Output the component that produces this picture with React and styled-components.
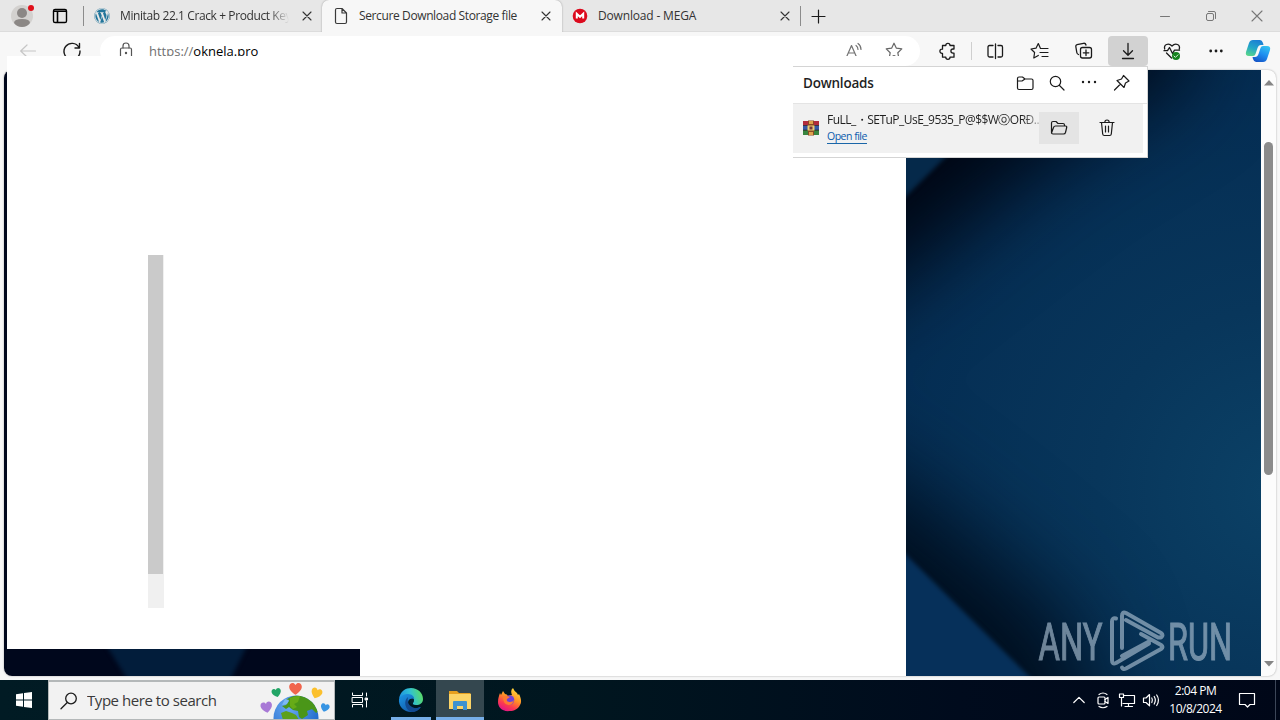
import React from 'react';
import styled, { createGlobalStyle } from 'styled-components';
import { FaWordpress } from 'react-icons/fa';

const GlobalStyle = createGlobalStyle`
  * { box-sizing: border-box; }
  body {
    margin: 0;
    overflow: hidden;
    font-family: 'Open Sans', 'Noto Sans', sans-serif;
  }
`;

const Screen = styled.div`
  position: relative;
  display: flex;
  flex-direction: column;
  width: 1280px;
  height: 720px;
  background: #f7f7f7;
`;

const Icon = styled.svg`
  display: block;
  flex: none;
  width: ${({ $w }) => $w || 20}px;
  height: ${({ $h, $w }) => $h || $w || 20}px;
  fill: none;
  stroke: ${({ $color }) => $color || '#1b1b1b'};
  stroke-width: ${({ $stroke }) => $stroke || 1.2};
  stroke-linecap: round;
  stroke-linejoin: round;
  overflow: visible;
`;

const Label = styled.span`
  flex: ${({ $grow }) => ($grow ? '1' : 'none')};
  overflow: hidden;
  white-space: nowrap;
  font-size: ${({ $size }) => $size || 12}px;
  font-weight: ${({ $bold }) => ($bold ? 600 : 400)};
  letter-spacing: ${({ $space }) => $space || 0}px;
  color: ${({ $color }) => $color || '#333'};
  ${({ $fade }) => $fade && 'mask-image: linear-gradient(to right, #000 88%, transparent);'}
`;

/* tab strip */

const TabStrip = styled.header`
  display: flex;
  flex: none;
  height: 32px;
  background: #e7e7e7;
  border-bottom: 1px solid #dcdcdc;
`;

const Profile = styled.div`
  display: flex;
  align-items: center;
  gap: 17px;
  width: 83px;
  padding-left: 10px;
`;

const Tab = styled.div`
  display: flex;
  align-items: center;
  position: relative;
  width: ${({ $active }) => ($active ? 240 : 238)}px;
  height: ${({ $active }) => ($active ? 32 : 31)}px;
  padding: ${({ $active }) => ($active ? '0 8px 1px 11px' : '0 7px 0 10px')};
  gap: 10px;
  background: ${({ $active }) => ($active ? '#f7f7f7' : 'transparent')};
  border-radius: ${({ $active }) => ($active ? '7px 7px 0 0' : '0 0 6px 6px')};
  box-shadow: ${({ $active }) => ($active ? '0 0 2px rgba(0, 0, 0, 0.35)' : 'none')};
  clip-path: inset(0 -3px 0 -3px);
`;

const Separator = styled.i`
  flex: none;
  align-self: center;
  width: 1px;
  height: ${({ $h }) => $h || 20}px;
  margin-left: ${({ $left }) => $left || 0}px;
  background: ${({ $color }) => $color || '#8c8c8c'};
`;

const NewTab = styled.div`
  display: flex;
  flex: 1;
  align-items: center;
  padding-left: 9px;
`;

const WindowButtons = styled.div`
  display: flex;
  align-items: center;
  gap: 30px;
  padding-right: 15px;
`;

/* toolbar */

const Toolbar = styled.nav`
  display: flex;
  flex: none;
  align-items: center;
  height: 38px;
  padding-left: 6px;
  background: #f7f7f7;
`;

const ToolButton = styled.div`
  display: flex;
  flex: none;
  align-items: center;
  justify-content: center;
  width: ${({ $w }) => $w || 44}px;
  height: 30px;
  margin-left: ${({ $left }) => $left || 0}px;
  margin-right: ${({ $right }) => $right || 0}px;
  border-radius: 4px;
  background: ${({ $pressed }) => ($pressed ? '#d2d2d2' : 'transparent')};
`;

const AddressBar = styled.div`
  display: flex;
  align-items: center;
  width: 820px;
  height: 30px;
  margin: 0 6px;
  padding: 0 6px 0 16px;
  border-radius: 15px;
  background: #fff;
`;

const Url = styled.span`
  flex: 1;
  margin-left: 13px;
  font-size: 13px;
  color: #707070;
  b {
    font-weight: 400;
    color: #000;
  }
`;

/* page */

const Page = styled.main`
  display: flex;
  flex: none;
  width: 1272px;
  height: 606px;
  margin-left: 4px;
  border-radius: 8px;
  overflow: hidden;
  background: #fcfcfc;
  box-shadow: 0 0 2px rgba(0, 0, 0, 0.35);
`;

const Wallpaper = styled.svg`
  display: block;
  width: 1257px;
  height: 606px;
`;

const ScrollTrack = styled.div`
  display: flex;
  flex-direction: column;
  align-items: center;
  justify-content: space-between;
  width: 15px;
  padding: 10px 0 9px;
`;

const ScrollThumb = styled.div`
  width: 9px;
  height: 333px;
  margin-bottom: 130px;
  border-radius: 5px;
  background: #8b8b8b;
`;

/* half painted window sitting over the browser */
const BlankWindow = styled.section`
  position: absolute;
  left: 7px;
  top: 56px;
  width: 899px;
  height: 620px;
  padding: 199px 0 0 141px;
  background: #fff;
  clip-path: polygon(0 0, 899px 0, 899px 620px, 353px 620px, 353px 593px, 0 593px);
`;

const BlankScroll = styled.div`
  width: 16px;
  height: 353px;
  background: #f0f0f0;
  &::before {
    content: '';
    display: block;
    width: 15px;
    height: 319px;
    background: #cacaca;
  }
`;

/* downloads flyout */

const Flyout = styled.aside`
  position: absolute;
  left: 793px;
  top: 66px;
  width: 355px;
  height: 92px;
  background: #fff;
  border: solid #d4d4d4;
  border-width: 1px 1px 1px 0;
`;

const FlyoutHead = styled.div`
  display: flex;
  align-items: center;
  height: 37px;
  padding: 0 17px 5px 10px;
  border-bottom: 1px solid #e4e4e4;
`;

const FlyoutTools = styled.div`
  display: flex;
  gap: 14px;
  margin-left: auto;
`;

const DownloadRow = styled.div`
  display: flex;
  align-items: center;
  width: 350px;
  height: 49px;
  padding: 0 0 2px 10px;
  background: #f1f1f1;
`;

const FileInfo = styled.div`
  display: flex;
  flex-direction: column;
  align-items: flex-start;
  width: 212px;
  margin-left: 8px;
`;

const FileName = styled(Label)`
  width: 212px;
  height: 17px;
  line-height: 18px;
  mask-image: linear-gradient(to right, #000 92%, rgba(0, 0, 0, 0.3));
`;

const OpenLink = styled.a`
  height: 15px;
  margin-top: 1px;
  border-bottom: 1px solid #1a66a8;
  font-size: 10.5px;
  line-height: 14px;
  letter-spacing: -0.5px;
  color: #0b5cad;
`;

const RowButton = styled.div`
  display: flex;
  align-items: center;
  justify-content: center;
  width: 40px;
  height: 32px;
  margin-right: 8px;
  background: ${({ $on }) => ($on ? '#e4e4e4' : 'transparent')};
`;

/* taskbar */

const Taskbar = styled.footer`
  display: flex;
  flex: none;
  height: 40px;
  margin-top: 4px;
  background: linear-gradient(to right, #011b24, #00161f 45%, #000b1d 75%, #000718);
`;

const TaskButton = styled.div`
  display: flex;
  align-items: center;
  justify-content: center;
  width: ${({ $w }) => $w || 48}px;
  margin-right: ${({ $right }) => $right || 0}px;
  background: ${({ $on }) => ($on ? '#34474f' : 'transparent')};
  box-shadow: ${({ $open }) => ($open ? 'inset 0 -3px #76aee8' : 'none')};
`;

const SearchBox = styled.div`
  display: flex;
  align-items: center;
  justify-content: space-between;
  width: 287px;
  margin-right: 1px;
  padding: 0 5px 0 11px;
  border: 1px solid #b4b8b9;
  border-width: 2px 1px 1px;
  background: #f2f2f2;
`;

const SearchHint = styled(Label)`
  flex: 1;
  margin-left: 9px;
  padding-bottom: 2px;
`;

const Tray = styled.div`
  display: flex;
  align-items: center;
  margin-left: auto;
  padding-right: 4px;
`;

const Clock = styled.div`
  width: 65px;
  text-align: center;
  font-size: 12px;
  line-height: 18px;
  letter-spacing: -0.5px;
  color: #fff;
`;

const Close = ({ size = 8, color = '#333' }) => (
  <Icon $w={16} viewBox="0 0 16 16" $color={color} $stroke={1.1}>
    <path d={`M${8 - size / 2} ${8 - size / 2}l${size} ${size}m0 ${-size}l${-size} ${size}`} />
  </Icon>
);

const Dots = ({ gap = 5, r = 1.2 }) => (
  <Icon viewBox="0 0 20 20" $color="none">
    <g fill="#1b1b1b">
      <circle cx={10 - gap} cy="10" r={r} />
      <circle cx="10" cy="10" r={r} />
      <circle cx={10 + gap} cy="10" r={r} />
    </g>
  </Icon>
);

const Tabs = () => (
  <TabStrip>
    <Profile>
      <Icon $w={24} viewBox="0 0 24 24" $color="none">
        <circle cx="12" cy="12" r="11" fill="#d3d1cf" />
        <circle cx="12" cy="9" r="5" fill="#8b8785" />
        <path d="M4 19q0-4 8-4t8 4q-3 4-8 4t-8-4" fill="#8b8785" />
        <circle cx="21" cy="4" r="3" fill="#e0101b" />
      </Icon>
      <Icon $w={18} viewBox="0 0 18 18" $stroke={1.4} $color="#000">
        <rect x="2.5" y="2.5" width="13" height="13" rx="1.6" />
        <path d="M3 4.2h12M6.5 5v10" strokeWidth="1.6" />
      </Icon>
    </Profile>
    <Separator />
    <Tab>
      <FaWordpress size={16} color="#21759b" style={{ flex: 'none' }} />
      <Label $grow $fade $space={-0.4}>Minitab 22.1 Crack + Product Key</Label>
      <Close />
    </Tab>
    <Tab $active>
      <Icon $w={16} viewBox="0 0 16 16" $color="#3a3a3a">
        <path d="M2.5 2q0-1.5 1.5-1.5h5L13.5 5v9q0 1.5-1.5 1.5H4q-1.5 0-1.5-1.5zM9 .5V5h4.5" />
      </Icon>
      <Label $grow $space={-0.38}>Sercure Download Storage file</Label>
      <Close />
    </Tab>
    <Tab>
      <Icon $w={16} viewBox="0 0 16 16" $color="#fff" $stroke={2}>
        <circle cx="8" cy="8" r="7.3" fill="#dc0a1d" stroke="none" />
        <path d="M4.8 10.5V5.8L8 8.8l3.2-3v4.7" strokeLinejoin="miter" strokeLinecap="butt" />
      </Icon>
      <Label $grow $space={-0.17}>Download - MEGA</Label>
      <Close />
    </Tab>
    <Separator />
    <NewTab>
      <Icon $w={16} viewBox="0 0 16 16">
        <path d="M8.5 2v13M2 8.5h13" />
      </Icon>
    </NewTab>
    <WindowButtons>
      <Icon $w={16} viewBox="0 0 16 16" $color="#777" $stroke={1}><path d="M3.5 8.5h9" /></Icon>
      <Icon $w={16} viewBox="0 0 16 16" $color="#777" $stroke={1}>
        <rect x="3.5" y="5.5" width="7" height="7" rx="1.5" />
        <path d="M5.5 3.5H11q1.5 0 1.5 1.5v5.5" />
      </Icon>
      <Close size={10} color="#777" />
    </WindowButtons>
  </TabStrip>
);

const Copilot = () => (
  <Icon $w={26} viewBox="0 0 26 26" $color="none">
    <defs>
      <linearGradient id="copA" x1="0.6" y1="0" x2="0.2" y2="1">
        <stop offset="0" stopColor="#1c7fd4" />
        <stop offset="0.5" stopColor="#23a6c8" />
        <stop offset="1" stopColor="#58d68a" />
      </linearGradient>
      <linearGradient id="copB" x1="0.8" y1="0" x2="0.3" y2="1">
        <stop offset="0" stopColor="#35c3f0" />
        <stop offset="0.5" stopColor="#1e8ff0" />
        <stop offset="1" stopColor="#1556c8" />
      </linearGradient>
    </defs>
    <path d="M8 2h7q2 0 3 3l.5 2h-2.5q-2.5 0-3.500 3l-2 6q-.6 2-2.5 2H4Q0 18 1 14L4 5q1-3 4-3z" fill="url(#copA)" />
    <path d="M18 24h-7q-2 0-3-3l-.5-2h2.5q2.500 0 3.500-3l2-6q.6-2 2.500-2h4q4 0 3 4l-3 9q-1 3-4 3z" fill="url(#copB)" />
  </Icon>
);

const Tools = () => (
  <Toolbar>
    <ToolButton>
      <Icon viewBox="0 0 20 20" $color="#c6c6c6"><path d="M17.5 10H3M9 4l-6.3 6L9 16" /></Icon>
    </ToolButton>
    <ToolButton>
      <Icon viewBox="0 0 20 20" $stroke={1.4}>
        <path d="M17 6.5A8 8 0 1 0 18 10M17.5 2.5v4.5H13" />
      </Icon>
    </ToolButton>
    <AddressBar>
      <Icon viewBox="0 0 20 20" $color="#555">
        <rect x="4.5" y="7" width="11" height="10" rx="1.5" />
        <path d="M7 7V5q0-3 3-3t3 3v2" />
        <circle cx="10" cy="12" r=".6" fill="#555" />
      </Icon>
      <Url>https://<b>oknela.pro</b></Url>
      <ToolButton $w={40}>
        <Icon viewBox="0 0 20 20" $color="#737373">
          <path d="M2.5 16L7.5 4.5 12.5 16M4.3 12h6.5M12 4.5q2 1.5 2 4M14 2.5q3 2 3 6" />
        </Icon>
      </ToolButton>
      <ToolButton $w={40}>
        <Icon viewBox="0 0 20 20" $color="#666">
          <path d="M10 2.200l2.400 5 5.400.7-4 3.800 1 5.500-4.800-2.700-4.800 2.700 1-5.500-4-3.800 5.400-.7z" />
        </Icon>
      </ToolButton>
    </AddressBar>
    <ToolButton $w={44}>
      <Icon viewBox="0 0 20 20" $stroke={1.3}>
        <path d="M4.500 4.500h3.300a2.100 2.100 0 0 1 4.200 0h4v3.500h-1a2 2 0 0 0 0 4.200h1v4h-4a2.100 2.100 0 0 1-4.200 0H4.500v-3.800H4a2.100 2.100 0 0 1 0-4.200h.5z" />
      </Icon>
    </ToolButton>
    <Separator $left={1} $color="#cfcfcf" $h={18} />
    <ToolButton $left={1}>
      <Icon viewBox="0 0 20 20" $stroke={1.3}>
        <path d="M8 4.500H4.500q-1.500 0-1.500 1.500v8.500q0 1.500 1.500 1.500H8M13 4.500h3q1.500 0 1.500 1.500v8.500q0 1.500-1.500 1.500H13M10.500 3v14.500" />
      </Icon>
    </ToolButton>
    <ToolButton $left={1}>
      <Icon viewBox="0 0 20 20">
        <path d="M11.500 7.500h-1L8.300 2.500 6 7.200l-5 .8 3.600 3.500-.8 5.500 4.500-2.600M12 7.500h6M10 11.500h8M12 15.500h6" />
      </Icon>
    </ToolButton>
    <ToolButton $right={2}>
      <Icon viewBox="0 0 20 20" $stroke={1.3}>
        <path d="M4.500 13.500q-1.500-.5-1.700-2L1.800 5.500Q1.600 4 3 3.600l6.500-1.300q2-.3 2.500 1.700" />
        <rect x="6.500" y="6.500" width="11" height="10.500" rx="2" />
        <path d="M12 9v5.500M9.300 11.800h5.500" />
      </Icon>
    </ToolButton>
    <ToolButton $w={40} $pressed $right={2}>
      <Icon viewBox="0 0 20 20" $stroke={1.3}>
        <path d="M10 2.500V14M5.500 9.800L10 14.300l4.500-4.500M4.500 17.500h11" />
      </Icon>
    </ToolButton>
    <ToolButton>
      <Icon viewBox="0 0 20 20" $stroke={1.3}>
        <path d="M2.700 8C1.500 3.500 6.500 1.500 10 5c3.500-3.500 8.500-1.500 7.300 3M2 9.700h3.500L7.500 6.500l3 6 2-3.300h5M4.500 12l5 5" />
        <circle cx="14" cy="15" r="4" fill="#16821e" stroke="none" />
        <path d="M12 15l1.400 1.400 2.600-2.600" stroke="#d9f0d9" strokeWidth="1" />
      </Icon>
    </ToolButton>
    <ToolButton><Dots r={1.4} gap={5.300} /></ToolButton>
    <ToolButton $w={40}><Copilot /></ToolButton>
  </Toolbar>
);

const Backdrop = () => (
  <Wallpaper viewBox="4 70 1257 606">
    <defs>
      <radialGradient id="glow" gradientUnits="userSpaceOnUse" cx="1280" cy="490" r="520">
        <stop offset="0" stopColor="#0b4166" />
        <stop offset="0.35" stopColor="#08365b" />
        <stop offset="0.75" stopColor="#052e54" />
        <stop offset="1" stopColor="#03284a" />
      </radialGradient>
      <filter id="soft" filterUnits="userSpaceOnUse" x="500" y="-250" width="1000" height="1300" colorInterpolationFilters="sRGB">
        <feGaussianBlur stdDeviation="46" />
      </filter>
      <filter id="edge" colorInterpolationFilters="sRGB"><feGaussianBlur stdDeviation="2" /></filter>
    </defs>
    <rect x="4" y="70" width="1257" height="606" fill="#00071c" />
    <path d="M103 640H250L225 690H134Z" fill="#021d3b" filter="url(#edge)" />
    <rect x="900" y="70" width="361" height="606" fill="url(#glow)" />
    <g filter="url(#soft)">
      <path d="M700 380L880 290 950 235 1060 150 1190 70 1160 -150 700 -150Z" fill="#000613" />
      <path d="M700 380L880 470 960 530 1080 630 1120 850 700 850Z" fill="#000e1e" />
    </g>
    <path d="M880 130H973L880 222Z" fill="#05294a" filter="url(#edge)" />
    <path d="M880 529L1055 702H880Z" fill="#06305a" filter="url(#edge)" />
    <g fill="#a9bed0" stroke="#a9bed0" strokeWidth="1.2" opacity=".65" fontFamily="Roboto, sans-serif" fontSize="52">
      <text x="1038.500" y="659.500" textLength="64" lengthAdjust="spacingAndGlyphs">ANY</text>
      <text x="1168" y="659.500" textLength="64" lengthAdjust="spacingAndGlyphs">RUN</text>
    </g>
    <g fill="none" stroke="#a9bed0" strokeWidth="4" opacity=".65" strokeLinejoin="round" strokeLinecap="round">
      <path d="M1116 618.500q-4-1-4 3V660q0 5 4 3L1149 643.500" />
      <path d="M1122 648V616q0-5 4-3l35 20q3 2 0 4.500h-3L1126 620" />
      <path d="M1122 656L1149 641.500M1141 634L1161 645q3 2 0 4L1126 668.500q-3 1.500-4-1" />
    </g>
  </Wallpaper>
);

const Arrow = ({ down }) => (
  <Icon $w={10} $h={6} viewBox="0 0 10 6" $color="none">
    <path d={down ? 'M0 0H10L5 5.5Z' : 'M0 5.5H10L5 0Z'} fill="#858585" />
  </Icon>
);

const WinRar = () => (
  <Icon $w={16} viewBox="0 0 16 16" $color="none">
    <path d="M0 1h16v4.500H0z" fill="#b22b3c" />
    <path d="M0 5.500h16V10H0z" fill="#3559a5" />
    <path d="M0 10h16v5H0z" fill="#38853f" />
    <path d="M0 5h16v.8H0zM0 9.700h16v.8H0z" fill="#271f26" />
    <path d="M5 .5h6v15H5z" fill="#8a4a24" />
    <path d="M6 1h4v3H6zM6 12h4v3H6z" fill="#e0a14c" />
    <path d="M4.500 5.500h7v5h-7z" fill="#e8cc75" />
    <path d="M6.500 6.500h3v3h-3z" fill="#76363a" />
  </Icon>
);

const Downloads = () => (
  <Flyout>
    <FlyoutHead>
      <Label $bold $size={13.5} $space={-0.22} $color="#1f1f1f">Downloads</Label>
      <FlyoutTools>
        <Icon $w={18} viewBox="0 0 18 18">
          <path d="M1.500 4.500Q1.500 3 3 3h3.500L9 5h6.500q1.500 0 1.500 1.500v7.500q0 1.500-1.500 1.500H3q-1.500 0-1.500-1.500zM1.500 7H6l3-2" />
        </Icon>
        <Icon $w={18} viewBox="0 0 18 18"><circle cx="7.5" cy="7.5" r="5.2" /><path d="M11.500 11.500l4.500 4.500" /></Icon>
        <Icon $w={18} viewBox="0 0 18 18" $color="none">
          <g fill="#1b1b1b"><circle cx="3" cy="8" r="1.2" /><circle cx="9" cy="8" r="1.2" /><circle cx="15" cy="8" r="1.2" /></g>
        </Icon>
        <Icon $w={18} viewBox="0 0 18 18">
          <path d="M11.500 1.500l5.500 5.500-3.500 2-1.500 4.500-7-7L9.500 5zM8.500 10l-6 6" />
        </Icon>
      </FlyoutTools>
    </FlyoutHead>
    <DownloadRow>
      <WinRar />
      <FileInfo>
        <FileName $size={12} $space={-0.52} $color="#1f1f1f">FuLL_・SETuP_UsE_9535_P@$$WⓞORÐ...</FileName>
        <OpenLink>Open file</OpenLink>
      </FileInfo>
      <RowButton $on>
        <Icon $w={18} viewBox="0 0 18 18">
          <path d="M1.500 13.500V4Q1.500 2.500 3 2.500h3L8 4.500h5q1.500 0 1.500 1.500V7M1.500 14L3.500 8.500q.5-1.500 2-1.500h10q1.500 0 1.200 1.500l-1.200 5q-.4 1.500-2 1.500H3Q1.500 15 1.500 13.500" />
        </Icon>
      </RowButton>
      <RowButton>
        <Icon $w={18} viewBox="0 0 18 18">
          <path d="M2 3.500h14M6.800 3.500q0-2.500 2.200-2.500T11.200 3.500M3.500 3.500l1.200 11.500q.2 1.500 1.600 1.500h5.400q1.400 0 1.600-1.500L14.500 3.500M7.500 7v6M10.500 7v6" />
        </Icon>
      </RowButton>
    </DownloadRow>
  </Flyout>
);

const Heart = ({ x, y, fill, turn = 0, s = 1 }) => (
  <path
    d="M0 5.500C-3 3.500-5.500 1-5.500-1.500-5.500-5-1.500-6 0-3 1.500-6 5.500-5 5.500-1.500 5.500 1 3 3.500 0 5.500Z"
    fill={fill}
    transform={`translate(${x} ${y}) rotate(${turn}) scale(${s})`}
  />
);

const Earth = () => (
  <Icon $w={69} $h={37} viewBox="260 682 69 37" $color="none">
    <defs>
      <radialGradient id="sea" cx="0.35" cy="0.25" r="0.8">
        <stop offset="0" stopColor="#6aa9f2" />
        <stop offset="1" stopColor="#1763c6" />
      </radialGradient>
      <clipPath id="boxEdge"><path d="M255 682h76v37h-76z" /></clipPath>
      <clipPath id="globe"><circle cx="296" cy="718" r="22.500" /></clipPath>
    </defs>
    <g clipPath="url(#boxEdge)">
      <circle cx="296" cy="718" r="22.500" fill="url(#sea)" />
      <g clipPath="url(#globe)">
        <path d="M286 700q6-5 16-5 12 3 17 16l-3 2-4-4-5 2 1 4-6 4-3-2-1-6-5-1-4-3-3 2-4-3 4-1 3-4z" fill="#4a9618" />
        <path d="M290 698q5-2 10-2l-2 6-4 2 3 3-4 2-3-3z" fill="#67ab17" />
        <path d="M281 713l5-2 6 2 4 2 3 5h-16z" fill="#5da01b" />
        <path d="M285 699l4 1-2 4-5 1z" fill="#7db9f5" />
      </g>
      <Heart x={295.5} y={688.5} fill="#f0654d" s={1.15} />
      <Heart x={276.5} y={692.5} fill="#22a465" turn={-15} s={0.85} />
      <Heart x={316.5} y={693} fill="#fbc02d" turn={20} />
      <Heart x={266.5} y={707} fill="#a879d6" turn={-10} s={1.05} />
      <Heart x={325} y={707.5} fill="#3794e3" turn={15} s={0.8} />
    </g>
  </Icon>
);

const EdgeLogo = () => (
  <Icon $w={26} viewBox="0 0 26 26" $color="none">
    <defs>
      <linearGradient id="edgeTop" x1="0" y1="0.6" x2="1" y2="0.4">
        <stop offset="0" stopColor="#1c8ee0" />
        <stop offset="0.5" stopColor="#2fc0d5" />
        <stop offset="1" stopColor="#5bdc63" />
      </linearGradient>
      <linearGradient id="edgeLow" x1="0" y1="0" x2="0.8" y2="1">
        <stop offset="0" stopColor="#1b97e6" />
        <stop offset="1" stopColor="#1252a3" />
      </linearGradient>
    </defs>
    <path d="M1 12C2 4 8 1 13 1c7 0 12 5 12 11 0 4-3 6-7 6-3 0-4-1-3-2 2-4-1-7-5-7-5 0-8 2-9 3z" fill="url(#edgeTop)" />
    <path d="M1 12c2-4 6-5 9-5 4 0 7 3 6 6-1-2-6-2-6 3 0 4 5 7 12 4 1 0 1 0 0 1-2 2-5 4-9 4C6 25 0 19 1 12z" fill="url(#edgeLow)" />
    <path d="M10 10c-5 4-3 13 4 15 4 0 7-2 8.500-4.500C15 23 8 18 10 10z" fill="#124a91" />
    <path d="M12.500 12.500q2.500-1.500 3.500 0 0 2-1 3.500-.5 1 1 1.800-3.500-.3-4-2.500-.2-1.800.5-2.800z" fill="#03202f" />
  </Icon>
);

const Explorer = () => (
  <Icon $w={24} viewBox="0 0 24 24" $color="none">
    <path d="M1 3h8l2 2h11.500v6H1z" fill="#e6a01f" />
    <path d="M1 6h22V21H1z" fill="#fbd467" />
    <path d="M5 14q0-1 1-1h12q1 0 1 1V22h-4v-4H9v4H5z" fill="#3e92cf" />
  </Icon>
);

const Firefox = () => (
  <Icon $w={24} viewBox="0 0 24 24" $color="none">
    <defs>
      <linearGradient id="fox" x1="0.8" y1="0" x2="0.3" y2="1">
        <stop offset="0" stopColor="#ffe13d" />
        <stop offset="0.45" stopColor="#ff9126" />
        <stop offset="0.75" stopColor="#fb3a50" />
        <stop offset="1" stopColor="#e31587" />
      </linearGradient>
    </defs>
    <path d="M3 5l1 2 2-4 2 3q2 0 3 2l4-1Q13 2 16 0q1 3 4 5l1 2 1-1c2 4 3 8 1 11-2 4-6 6-10 6C5 24 1 19 1 14c0-4 1-6 2-9z" fill="url(#fox)" />
    <circle cx="12.500" cy="12" r="4.800" fill="#7141d8" />
    <path d="M6 9q3-2 7 0l-3 2q-1 3 3 3 3 0 4-2-1 5-5.500 5Q6 16 6 9z" fill="#ff7a30" />
  </Icon>
);

const Bar = () => (
  <Taskbar>
    <TaskButton>
      <Icon $w={16} viewBox="0 0 16 16" $color="none">
        <path d="M0 2.300L7 1.300V7.500H0zM8 1.100L16 0v7.500H8zM0 8.500h7v6.200L0 13.700zM8 8.500h8V16l-8-1.100z" fill="#fff" />
      </Icon>
    </TaskButton>
    <SearchBox>
      <Icon $w={18} viewBox="0 0 18 18" $stroke={1.3}>
        <circle cx="11" cy="6.500" r="5.300" />
        <path d="M7.300 10.500L1 16.800" />
      </Icon>
      <SearchHint $size={15} $space={-0.45} $color="#3a3a3a">Type here to search</SearchHint>
      <Earth />
    </SearchBox>
    <TaskButton $right={7}>
      <Icon $w={16} viewBox="0 0 16 16" $color="#fff" $stroke={1}>
        <path d="M.5 1v2.500h10V1M.5 15v-2.500h10V15M14.500 1v3M14.500 9v6" />
        <rect x=".5" y="5.500" width="10" height="5" />
        <path d="M13.500 6h2v2h-2z" fill="#fff" />
      </Icon>
    </TaskButton>
    <TaskButton $w={40} $open $right={5}><EdgeLogo /></TaskButton>
    <TaskButton $on $open><Explorer /></TaskButton>
    <TaskButton $w={50}><Firefox /></TaskButton>
    <Tray>
      <TaskButton $w={24}>
        <Icon $w={12} viewBox="0 0 12 12" $color="#fff"><path d="M.8 8.500L6 3.300l5.200 5.200" /></Icon>
      </TaskButton>
      <TaskButton $w={24}>
        <Icon $w={16} viewBox="0 0 16 16" $color="#fff">
          <rect x="3" y="5" width="7" height="7" rx="1" />
          <path d="M10 7.500L13 5.500v6L10 9.500M4 2.500q4-3 8 0M4 14.500q4 2.500 8 0" />
        </Icon>
      </TaskButton>
      <TaskButton $w={24}>
        <Icon $w={16} viewBox="0 0 16 16" $color="#fff">
          <path d="M5 3.500h10.500v8H4M9.500 11.500V14M6 14.500h7.500M.5 2h4v3.500h-4zM2.500 5.500V14" />
        </Icon>
      </TaskButton>
      <TaskButton $w={24}>
        <Icon $w={16} viewBox="0 0 16 16" $color="#fff">
          <path d="M.5 6v4.500H3l3.500 3.300V2.500L3 6zM8.800 6q1.200 2 0 4.500M11.200 4.500q2.300 3.500 0 7.500M13.700 3q3.500 5 0 10.500" />
        </Icon>
      </TaskButton>
      <Clock>2:04 PM<br />10/8/2024</Clock>
      <TaskButton $w={38}>
        <Icon $w={16} viewBox="0 0 16 16" $color="#fff">
          <path d="M.5 1.500h15v11H11L8.500 15 6 12.500H.5z" />
        </Icon>
      </TaskButton>
      <Separator $h={40} $left={9} $color="#3c4658" />
    </Tray>
  </Taskbar>
);

const App = () => (
  <Screen>
    <GlobalStyle />
    <Tabs />
    <Tools />
    <Page>
      <Backdrop />
      <ScrollTrack>
        <Arrow />
        <ScrollThumb />
        <Arrow down />
      </ScrollTrack>
    </Page>
    <BlankWindow><BlankScroll /></BlankWindow>
    <Downloads />
    <Bar />
  </Screen>
);

export default App;
